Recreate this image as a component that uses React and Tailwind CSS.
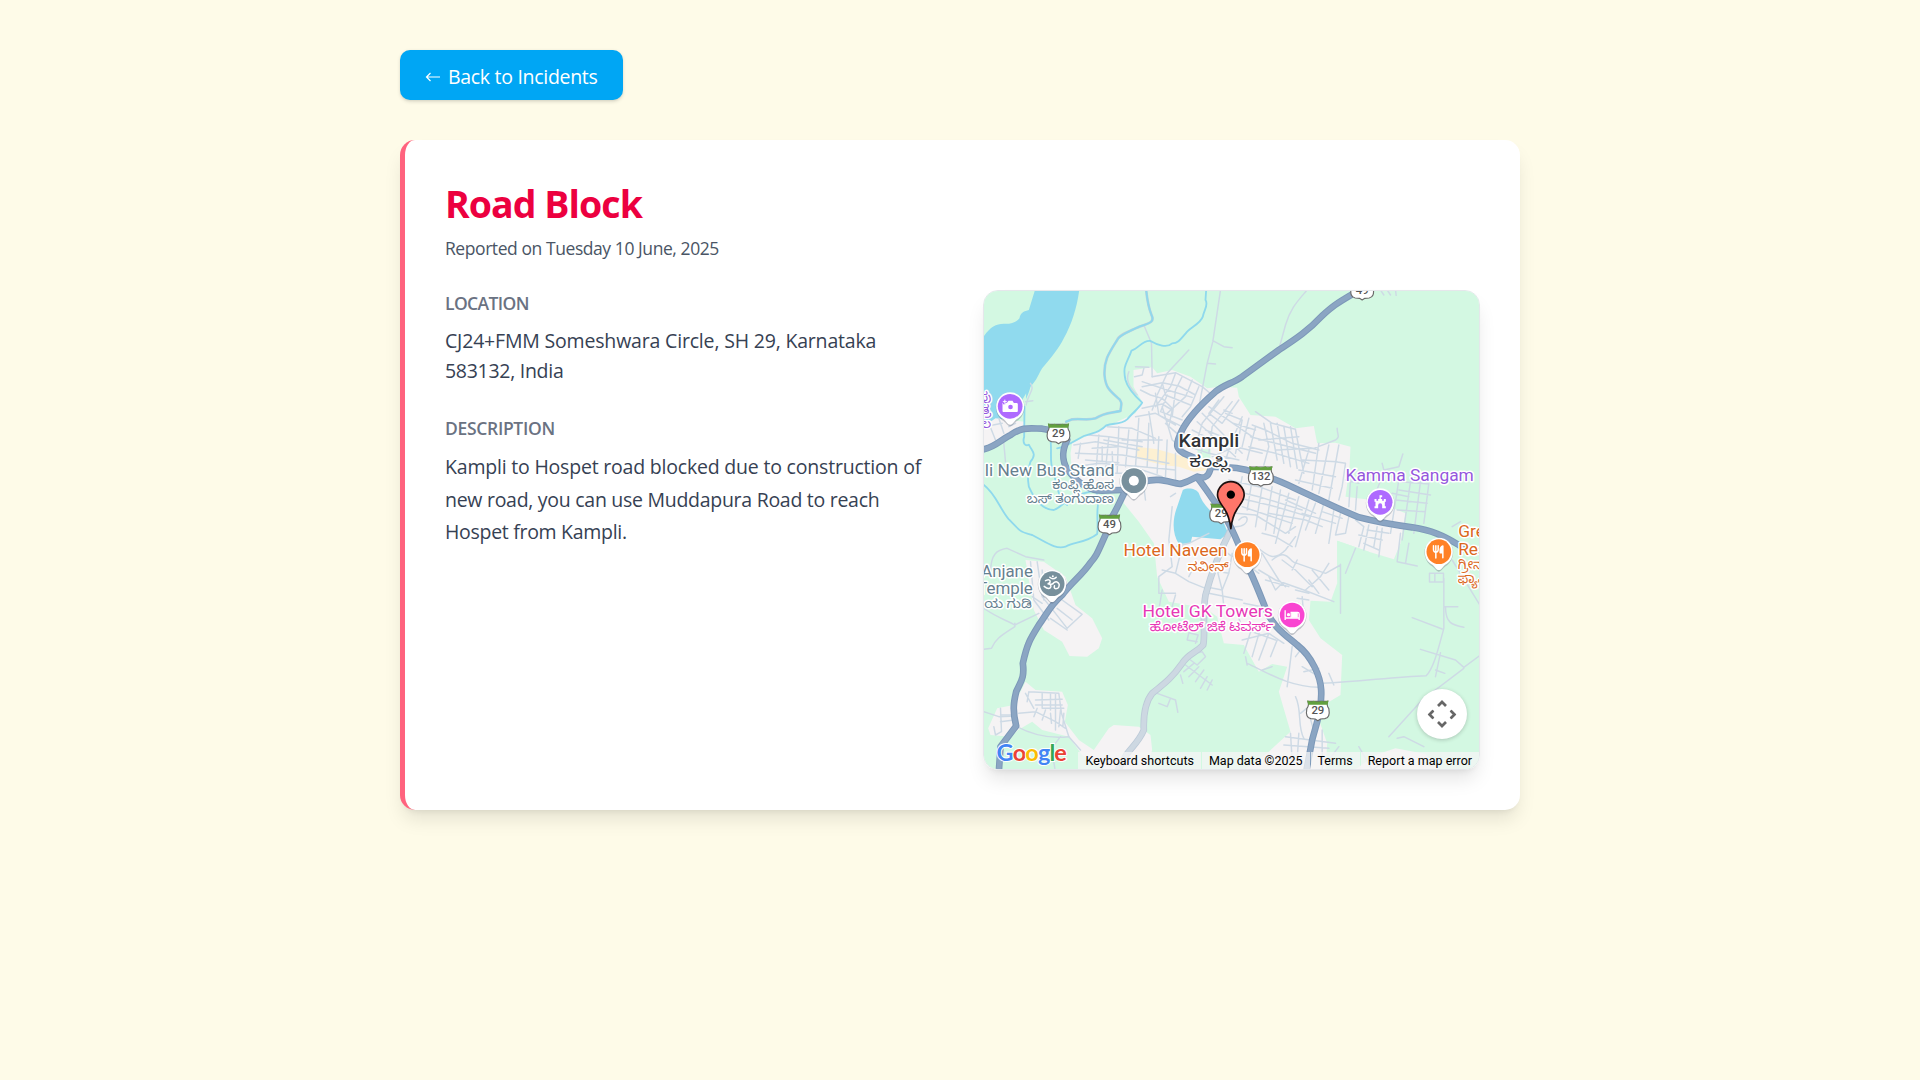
const MAP_FONT = 'Roboto, "Noto Sans", "Noto Sans Kannada", sans-serif';

const Label = ({ x, y, size, color, width, weight = 400, anchor = 'start', children }) => (
  <text
    x={x}
    y={y}
    fontSize={size}
    fill={color}
    fontWeight={weight}
    fontFamily={MAP_FONT}
    textAnchor={anchor}
    textLength={width}
    lengthAdjust="spacingAndGlyphs"
    stroke="#ffffff"
    strokeWidth="9"
    strokeLinejoin="round"
    paintOrder="stroke"
  >
    {children}
  </text>
);

const Shield = ({ x, y, w = 66, children }) => (
  <g transform={`translate(${x} ${y})`}>
    <path
      d={`M${-w / 2 + 3} -27 Q${-w / 2 + 8} -15 ${-w / 2} -5 Q${-w / 2 - 5} 22 ${-w / 2 + 12} 25 L-8 26 L0 31 L8 26 L${w / 2 - 12} 25 Q${w / 2 + 5} 22 ${w / 2} -5 Q${w / 2 - 8} -15 ${w / 2 - 3} -27 Z`}
      fill="#fff"
      stroke="#6b6b6b"
      strokeWidth="3.5"
      strokeLinejoin="round"
    />
    <path
      d={`M${-w / 2 + 1} -30 Q${-w / 4} -23 ${-w / 5} -29 Q0 -23 ${w / 5} -29 Q${w / 4} -23 ${w / 2 - 1} -30 L${w / 2 - 4} -17 H${-w / 2 + 4} Z`}
      fill="#62a03f"
    />
    <text x="0" y="12" fontSize="34" fill="#555" fontWeight="500" textAnchor="middle" fontFamily={MAP_FONT}>
      {children}
    </text>
  </g>
);

const Poi = ({ x, y, color, children }) => (
  <g transform={`translate(${x} ${y})`}>
    <path
      d="M0 58 C-7 58 -11 49 -20 42 C-34 34 -43 18 -43 0 A43 43 0 0 1 43 0 C43 18 34 34 20 42 C11 49 7 58 0 58 Z"
      fill="#5f6b78"
      opacity="0.35"
      transform="translate(0 2)"
    />
    <path
      d="M0 55 C-7 55 -10 48 -19 39 C-33 32 -42 18 -42 0 A42 42 0 0 1 42 0 C42 18 33 32 19 39 C10 48 7 55 0 55 Z"
      fill="#fff"
    />
    <circle r="37" fill={color} />
    {children}
  </g>
);

const Fork = () => (
  <g fill="none" stroke="#fff" strokeWidth="4.5" strokeLinecap="round">
    <path d="M-16 -18 V-6 Q-16 1 -9 1 Q-2 1 -2 -6 V-18 M-9 -18 V19" />
    <path d="M12 18 V-17 Q4 -14 4 -3 V3 H12" fill="#fff" strokeLinejoin="round" />
  </g>
);

const highways = [
  'M25 508 C60 500 75 480 105 465 C140 440 160 445 200 446 L250 455',
  'M275 480 C255 520 262 555 285 580 C310 610 340 632 380 632 L440 630',
  'M70 1475 L75 1400 L122 1338 C110 1290 115 1265 122 1235 C135 1205 148 1195 142 1150 C155 1090 165 1075 190 1035 C215 1000 225 975 260 945 C290 905 320 885 345 848 C365 825 365 820 392 760 L410 710 C425 685 435 660 450 632',
  'M1135 40 C1080 72 1070 80 1040 107 C995 155 955 180 910 210 L800 290 C770 310 745 315 720 335 C680 370 640 410 620 450 C595 500 605 508 625 520 L660 535',
  'M505 605 C550 592 575 605 615 612 C640 605 655 595 665 590 C690 600 702 585 706 560 L755 562 C800 562 830 575 860 587 C900 595 930 612 990 640 C1060 672 1080 683 1150 712 C1200 725 1240 733 1310 742 C1370 752 1400 765 1450 795 L1475 812',
  'M665 592 C690 625 710 655 735 690 C770 735 790 800 822 870 C845 920 860 960 870 985 C890 1040 930 1065 965 1095 C1010 1130 1035 1190 1037 1230 C1040 1290 1020 1340 1010 1380 L992 1475',
];

const greyRoads = [
  'M768 745 C740 800 710 870 690 945 C680 1000 690 1070 683 1095 C660 1120 640 1120 620 1150 C585 1200 560 1215 530 1240 C510 1265 503 1300 505 1350 C490 1385 470 1400 452 1425 L425 1475',
];

const rivers = [
  { d: 'M512 30 C515 60 520 85 528 105 C540 130 515 130 485 143 C460 155 430 165 425 180 C400 220 385 240 387 285 C390 320 400 330 425 352 C445 365 435 380 435 393 C400 400 385 398 360 415 C335 422 320 415 290 418 L272 425', bank: true },
  { d: 'M692 30 L690 60 C700 75 685 90 682 110 C675 130 650 140 635 155 C610 185 605 190 590 190 C575 205 545 195 525 183 C500 180 490 205 468 212 C455 250 440 255 450 300 C455 320 475 345 500 368 C495 380 470 400 455 418 C435 435 415 428 392 436 C370 460 350 458 325 468 C300 480 275 500 245 505', bank: false },
  { d: 'M147 380 L146 470 C140 490 150 500 160 494 C170 515 185 520 165 545 C155 570 155 590 160 620 C180 665 205 690 235 690 C260 680 265 665 285 655 C310 640 330 640 345 635', bank: false },
  { d: 'M225 480 C230 520 220 550 235 580 C245 620 250 660 275 675', bank: false },
  { d: 'M25 615 C60 640 75 690 100 718 C140 760 135 755 170 765 C210 785 240 810 270 800 C295 785 330 790 365 762 C370 730 360 700 370 660 L362 635', bank: false },
];

const towns = [
  'M474 270 L530 262 L545 280 L590 270 L645 290 L695 325 L735 320 L785 323 L790 350 L825 405 L900 410 L960 445 L1015 438 L1025 490 L1080 488 L1125 500 L1122 560 L1110 650 L1190 660 L1290 700 L1275 790 L1255 838 L1180 815 L1085 782 L1085 910 L1065 965 L1005 962 L1000 1020 L1035 1075 L1100 1125 L1095 1245 L1020 1290 L1055 1390 L1050 1475 L800 1475 L880 1415 L945 1355 L910 1235 L935 1160 L890 1152 L850 1175 L805 1095 L745 1090 L725 1010 L690 985 L580 965 L545 890 L535 790 L490 725 L445 670 L440 640 L330 620 L290 590 L285 520 L290 490 L350 460 L480 400 L500 365 L474 320 Z',
  'M25 430 L75 410 L147 425 L150 445 L95 470 L25 505 Z',
  'M150 840 L205 845 L270 890 L300 975 L350 1015 L380 1075 L370 1105 L335 1130 L282 1128 L260 1085 L205 1050 L175 990 Z',
  'M150 1205 L180 1230 L260 1235 L277 1275 L268 1325 L310 1380 L355 1410 L400 1345 L415 1335 L490 1340 L525 1365 L530 1410 L510 1475 L400 1475 L320 1425 L280 1370 L200 1350 L170 1325 L128 1350 L105 1370 L45 1365 L38 1345 L65 1285 L115 1275 Z',
  'M1130 1475 L1200 1425 L1260 1405 L1350 1422 L1400 1475 Z',
];

const streets = [
  // outer country lanes
  'M505 135 L528 190 L530 290 M735 30 L712 185 L695 250 L672 370 M712 182 L745 200 L770 203 M695 250 L720 252 M640 210 L575 280 L545 345 M993 32 C965 65 945 85 930 135 L910 208 M1215 30 L1225 45 M1235 30 L1245 45 M1260 30 L1262 46',
  'M165 310 C180 330 155 345 152 375 M150 365 L172 362 M85 490 L90 545 M25 1108 L48 1105 C60 1075 80 1065 118 1040 L118 1030 M25 985 C60 1010 90 1020 118 1035 L190 1000 M45 880 C45 820 65 810 95 805 L150 830 L205 840 M25 1295 L70 1310 L120 1308 M120 1338 C180 1370 240 1375 280 1370 M255 1370 L228 1405 L238 1465',
  'M1140 805 L1110 880 M1405 895 L1405 1045 C1390 1100 1375 1165 1352 1187 C1250 1190 1160 1205 1040 1210 M1362 880 h42 v26 h-42 Z M1378 880 v26 M1405 980 h42 M1410 980 C1410 1030 1430 1035 1465 1042 M1310 1013 L1400 1047 M1335 1108 L1440 1140 L1465 1162 L1515 1125 M1395 1118 L1380 1190 M1380 1170 L1408 1180 M1465 1165 L1340 1260 L1240 1370 M1265 1375 L1285 1370 L1345 1400 M1430 840 L1515 978',
  // north quarter
  'M477 290 L500 285 L505 265 M500 320 L560 308 L610 318 L660 345 M495 330 L525 345 L560 355 L590 385 M530 290 L600 278 L680 320 L710 345 M600 280 L585 320 L540 380 M540 340 L550 405 L600 435 M500 305 L575 330 L650 352 M560 308 L570 345 L645 375 M620 290 L600 330 L590 410 M650 300 L630 350 L575 400 M500 385 L560 372 L590 390 L580 440 M480 410 L540 400 L620 440 M520 395 L535 490 M560 380 L590 480 L640 520 M545 350 L530 390 M670 320 L645 380 L620 410 M570 430 L615 470 M480 260 L520 262 M460 275 C450 300 460 320 485 345 M575 345 L555 395 L620 420',
  // west quarter
  'M295 495 L360 485 L490 510 M300 520 L440 525 L580 550 M315 490 L308 535 M340 465 L400 470 L500 485 M370 465 L360 590 M400 470 L390 570 M430 440 L425 580 M460 450 L450 560 M490 415 L480 560 M300 560 L370 550 L500 560 L600 570 M335 580 L450 580 M350 505 L430 500 M440 480 L560 480 M520 430 L515 560 M385 480 L500 500 M330 540 L430 548 M395 440 L470 445 L540 475 M550 470 L545 580 M575 480 L570 590 M380 500 L380 545 M410 515 L412 560 M500 570 L560 590 M505 620 L510 660 M600 520 L600 600',
  // centre and north-east
  'M680 400 L800 520 M665 425 L780 530 M700 380 L830 470 M745 350 L680 430 L660 500 M770 365 L710 440 L700 520 M790 360 L740 430 M800 410 L770 480 L750 540 M820 415 L800 500 M770 400 L745 390 M775 430 L840 450 M690 450 L790 490 M750 400 L800 420 L780 520 M640 500 L700 520 L790 540 M730 360 L700 400 L740 430 M650 450 L690 470 L670 540 M710 530 L780 500 L860 520',
  'M840 395 L890 430 L960 448 M830 435 L870 450 L950 490 L1030 510 M825 470 L900 490 L1020 520 M820 500 L900 520 L1000 550 M840 440 L815 540 M865 430 L880 500 L865 555 M885 430 L905 540 M905 430 L925 550 M925 440 L945 560 M945 440 L965 565 M850 480 L970 470 M900 510 L1015 505 L1080 480 C1095 470 1085 465 1085 445 M960 450 L985 580 M1000 510 L970 610 M1030 490 L1010 630 M1060 495 L1030 640 M1090 495 L1060 660 M980 540 L1085 545 M970 570 L1080 590 M960 600 L1070 625 M1080 545 L1110 550 L1100 620 L1090 660 M1110 600 L1150 610 M1125 600 L1120 680 M1145 620 L1140 690',
  // east of the centre
  'M760 600 L850 620 L960 660 M745 625 L850 650 L980 690 M775 650 L900 680 L1000 710 M800 680 L950 730 M800 590 L785 670 M830 600 L815 690 M860 620 L840 740 M890 620 L870 750 M915 630 L895 760 M940 640 L900 790 M970 650 L940 760 M1000 660 L960 800 M780 700 L840 705 L930 760 L960 740 M1020 670 L990 750 M1045 670 L1020 760 M1075 690 L1060 790 M1095 700 L1080 765 L1110 760 L1120 710 M980 700 L1080 730 M930 660 L1020 700 M880 700 L990 720 L1040 740 M790 720 C820 690 830 740 780 740 M1040 695 L1100 715 M1140 720 L1165 740 L1150 800 M1180 735 L1165 810 M1205 740 L1195 800 M1150 765 L1220 780 M1175 750 L1240 760 M1165 790 L1210 810 M1220 745 L1210 830',
  // south-east quarter
  'M830 790 C870 820 890 850 930 810 L960 770 M860 820 L910 900 L930 920 M890 840 C940 800 940 850 965 850 L1050 880 L1095 855 M920 840 L960 870 L1010 920 M850 870 L900 900 L985 930 L1075 965 M880 890 L900 930 L920 910 M1060 850 L1035 890 L990 930 M1095 853 V1000 M870 900 L940 920 M810 850 L850 880 M1010 870 L1060 930 M960 930 L1000 940 M980 950 L985 1010 M965 955 L1000 960 M940 1010 L900 1040 M950 870 L965 840 M860 760 L900 770 L950 800 M1000 900 L1030 940',
  'M805 970 L880 985 M800 1080 L880 1060 L925 1090 M815 1050 L900 1080 M830 1040 L805 1120 M855 1045 L830 1130 M880 1060 L850 1140 M905 1080 L885 1130 M815 1150 C880 1180 940 1220 1030 1222 M810 1130 L815 1155 M950 1100 L935 1220 M960 1130 L975 1110 M980 1160 L1030 1190 M985 1175 L1030 1165 M1060 1180 L1075 1215 M960 1250 C980 1290 965 1340 985 1375 M930 1370 L1080 1390 M925 1395 L1060 1405 M945 1360 L950 1440 M970 1360 L965 1440 M1040 1350 L1040 1470 M1150 1400 L1190 1470 L1235 1440 M1090 1400 L1060 1440 M890 1160 L860 1170 M1000 1280 L975 1300 M1000 1300 L1020 1370',
  // south of the lake
  'M590 680 L580 780 L590 860 L550 890 L550 940 L600 940 M585 650 L600 640 M560 870 L600 880 L640 905 L690 925 M600 800 L640 790 L700 760 M620 800 L600 880 M640 890 L650 870 L645 850 M700 870 L760 880 L740 930 L690 920 M760 880 L770 820 M720 850 L740 930 M560 930 L550 990 M600 945 L590 980 M700 940 L800 960 M740 930 L745 980 M730 800 L770 830 L800 820 M745 980 L780 990 L800 1040',
  'M640 1058 L668 1065 L660 1090 M640 1058 L635 1080 L665 1085 M660 1120 L680 1115 L690 1130 L665 1155 L645 1140 M630 1155 L710 1215 M625 1175 L655 1150 M640 1190 L670 1160 M660 1205 L685 1170 M675 1225 L695 1190 M695 1230 L710 1200 M615 1185 L622 1210 M545 1240 L600 1260 L607 1297 M550 1270 L575 1280 L585 1255',
  // south-west hamlets
  'M165 845 L175 960 L220 1020 M185 845 L200 950 M200 870 L205 960 M200 950 L240 1000 L275 1045 L320 1003 L260 960 M225 1015 L275 1050 M170 950 L200 970 M245 985 L290 1020',
  'M160 1235 L250 1240 L258 1300 L280 1370 L315 1410 M160 1235 L155 1265 M180 1260 L260 1258 M180 1275 L260 1275 M200 1240 L200 1285 L265 1285 M225 1240 V1290 M240 1240 V1350 M130 1300 L180 1295 L240 1325 L270 1345 M185 1285 L175 1310 M255 1290 L250 1340 M75 1285 L78 1355 L60 1365 L55 1340 M75 1325 L115 1320 M75 1305 L110 1305 M210 1290 L200 1320 M150 1240 L175 1285 M265 1300 L262 1340 M225 1300 L228 1330',
  // north-east edge
  'M1270 600 L1245 760 M1270 630 L1365 645 M1275 605 L1360 612 M1260 660 L1355 670 M1265 690 L1350 695 M1305 605 L1280 780 M1335 605 L1315 760 M1360 610 L1345 730 M1220 590 L1200 640 M1220 550 L1225 570 L1270 560 L1282 522 M1275 760 L1265 845 L1325 858 M1300 790 L1290 850 M1250 640 L1300 650 M1430 740 L1455 725 M25 440 L80 430 M40 430 L60 480 M70 415 L85 460 M100 440 L120 430',
];

function MapCanvas() {
  return (
    <svg className="block h-full w-full" viewBox="25.5 33 1486.5 1434" preserveAspectRatio="none">
      <rect x="24" y="30" width="1491" height="1440" fill="#d3f8e2" />
      <g fill="#f5f3f4">
        {towns.map((d) => (
          <path key={d} d={d} />
        ))}
      </g>
      <path d="M485 500 L545 508 L640 535 L690 545 L700 570 L655 575 L610 560 L560 555 L485 535 Z" fill="#fdf0d2" />
      <path d="M665 508 H705 V535 H670 Z M1085 782 L1180 815 L1085 900 Z" fill="#d3f8e2" />
      <g fill="#90daee">
        <path d="M180 25 L160 90 C140 95 135 100 132 115 C120 130 100 132 85 131 C60 132 45 140 24 170 V440 H95 C125 410 155 360 165 320 C185 300 190 280 200 265 C230 230 250 205 265 175 C290 130 305 80 312 25 Z" />
        <path d="M622 630 C640 620 665 628 670 640 C680 670 700 690 745 730 L758 760 L735 778 L650 770 L645 790 L610 792 C590 760 590 720 605 680 Z" />
      </g>
      <path d="M24 435 L95 435 L152 340 L150 440 L24 500 Z" fill="#d3f8e2" />
      <path d="M24 440 L60 415 L148 425 L150 440 L60 485 L24 500 Z" fill="#f5f3f4" />
      <g fill="none" strokeLinecap="round" strokeLinejoin="round">
        {streets.map((d) => (
          <path key={d} d={d} stroke="#cedae5" strokeWidth="4.4" />
        ))}
        {rivers.map((r) => (
          <g key={r.d}>
            {r.bank && <path d={r.d} stroke="#c3cfdb" strokeWidth="8" />}
            <path d={r.d} stroke="#8fd9ed" strokeWidth="5.5" />
          </g>
        ))}
        {greyRoads.map((d) => (
          <g key={d}>
            <path d={d} stroke="#bccad8" strokeWidth="20" />
            <path d={d} stroke="#cdd8e2" strokeWidth="15" />
          </g>
        ))}
        {highways.map((d) => (
          <path key={d} d={d} stroke="#7c98b8" strokeWidth="20" />
        ))}
        {highways.map((d) => (
          <path key={d} d={d} stroke="#8ba5c3" strokeWidth="14" />
        ))}
      </g>

      <Shield x={249} y={460}>29</Shield>
      <Shield x={402} y={733}>49</Shield>
      <Shield x={1160} y={29}>49</Shield>
      <Shield x={856} y={588} w={72}>132</Shield>
      <Shield x={737} y={700}>29</Shield>
      <Shield x={1027} y={1291}>29</Shield>

      <Label x={609} y={500} size={56} color="#303236" weight={500} width={182}>Kampli</Label>
      <Label x={641} y={561} size={46} color="#303236" width={121}>ಕಂಪ್ಲಿ</Label>
      <Label x={28} y={587} size={52} color="#66808f" width={389}>li New Bus Stand</Label>
      <Label x={230} y={628} size={38} color="#66808f" width={186}>ಕಂಪ್ಲಿ ಹೊಸ</Label>
      <Label x={154} y={670} size={38} color="#66808f" width={261}>ಬಸ್ ತಂಗುದಾಣ</Label>
      <Label x={17} y={890} size={52} color="#66808f" width={155}>Anjane</Label>
      <Label x={5} y={942} size={52} color="#66808f" width={167}>Temple</Label>
      <Label x={26} y={983} size={38} color="#66808f" width={143}>ಯ ಗುಡಿ</Label>
      <Label x={444} y={829} size={52} color="#db681d" width={312}>Hotel Naveen</Label>
      <Label x={637} y={873} size={38} color="#db681d" width={122}>ನವೀನ್</Label>
      <Label x={501} y={1011} size={52} color="#e737b6" width={391}>Hotel GK Towers</Label>
      <Label x={523} y={1053} size={38} color="#e737b6" width={371}>ಹೋಟೆಲ್ ಜಿಕೆ ಟವರ್ಸ್</Label>
      <Label x={1110} y={602} size={52} color="#9457dd" width={385}>Kamma Sangam</Label>
      <Label x={1448} y={772} size={52} color="#db681d">Green</Label>
      <Label x={1448} y={824} size={52} color="#db681d">Restaurant</Label>
      <Label x={1447} y={866} size={40} color="#db681d">ಗ್ರೀನ್</Label>
      <Label x={1447} y={908} size={40} color="#db681d">ಫ್ಯಾಮಿಲಿ</Label>
      <Label x={47} y={362} size={38} color="#9457dd" anchor="end">ಪು</Label>
      <Label x={47} y={402} size={38} color="#9457dd" anchor="end">ತ್ರ</Label>
      <Label x={47} y={445} size={38} color="#9457dd" anchor="end">ಲ</Label>

      <Poi x={104} y={379} color="#ae6aff">
        <path d="M-23 -10 H-10 L-5 -17 H7 L11 -10 H19 Q23 -10 23 -6 V14 Q23 17 20 17 H-20 Q-23 17 -23 14 Z" fill="#fff" />
        <circle cx="1" cy="2" r="7" fill="#ae6aff" />
        <path d="M-18 -22 V-6 M-26 -14 H-10" stroke="#ae6aff" strokeWidth="7" />
        <path d="M-16 -20 V-8 M-22 -14 H-10" stroke="#fff" strokeWidth="3" />
      </Poi>
      <Poi x={475} y={602} color="#78909c">
        <circle r="15" fill="#fff" />
      </Poi>
      <Poi x={230} y={911} color="#78909c">
        <g fill="none" stroke="#fff" strokeWidth="4.5" strokeLinecap="round">
          <path d="M-20 -9 Q-6 -15 -6 -6 Q-7 0 -14 0 Q-3 0 -4 9 Q-8 20 -24 8 M-7 1 Q2 4 5 -3 Q16 -10 21 2 Q22 15 11 15 Q4 14 7 6 M-7 -19 Q2 -10 12 -19" />
        </g>
        <circle cx="2" cy="-22" r="3" fill="#fff" />
      </Poi>
      <Poi x={815} y={824} color="#ff8126">
        <Fork />
      </Poi>
      <Poi x={1390} y={815} color="#ff8126">
        <Fork />
      </Poi>
      <Poi x={950} y={1005} color="#f945d1">
        <path d="M-21 -14 V15 M-21 9 H21 M21 15 V-3 Q21 -8 16 -8 H-3 V8" fill="none" stroke="#fff" strokeWidth="4" />
        <path d="M-2 -7 H17 V8 H-2 Z" fill="#fff" />
        <circle cx="-11" cy="-1" r="5" fill="#fff" />
      </Poi>
      <Poi x={1214} y={667} color="#ae6aff">
        <path
          d="M-17 -10 H-11 V-5 H-6 V-10 H-2 V-21 H6 V-15 H2 V-10 H6 V-5 H11 V-10 H17 V-2 H14 V12 H17 V18 H6 V9 Q6 3 0 3 Q-6 3 -6 9 V18 H-17 V12 H-14 V-2 H-17 Z"
          fill="#fff"
        />
      </Poi>

      <path
        d="M766 746 C763 720 758 704 747 687 C738 673 726 661 726 645 A40 40 0 0 1 806 645 C806 661 794 673 785 687 C774 704 769 720 766 746 Z"
        fill="#ff766a"
        stroke="#1c0f0e"
        strokeWidth="5"
        strokeLinejoin="round"
      />
      <circle cx="766" cy="644" r="12.5" fill="#000" />
    </svg>
  );
}

const Chevron = ({ className }) => (
  <svg viewBox="0 0 10 7" className={`absolute h-[7px] w-[10px] ${className}`} fill="none" stroke="#666" strokeWidth="2.7">
    <path d="M1 6 L5 2 L9 6" />
  </svg>
);

const googleLetters = [
  ['G', 'text-[#4285f4]'],
  ['o', 'text-[#ea4335]'],
  ['o', 'text-[#fbbc05]'],
  ['g', 'text-[#4285f4]'],
  ['l', 'text-[#34a853]'],
  ['e', 'text-[#ea4335]'],
];

function IncidentMap() {
  return (
    <div className="relative h-[480px] overflow-hidden rounded-[15px] border border-gray-200 shadow-[0_12.5px_18.75px_-3.75px_rgba(0,0,0,0.1),0_5px_7.5px_-5px_rgba(0,0,0,0.1)]">
      <MapCanvas />
      <div
        className="absolute bottom-[2px] left-[13px] flex text-[23.5px] leading-[30px] font-bold tracking-[-0.9px] [-webkit-text-stroke:2px_white] [paint-order:stroke_fill]"
        style={{ fontFamily: '"Product Sans", Lato, sans-serif' }}
      >
        {googleLetters.map(([letter, color], i) => (
          <span key={i} className={color}>{letter}</span>
        ))}
      </div>
      <button className="absolute right-[12px] bottom-[30px] size-[50px] rounded-full bg-white shadow-[0_1px_4px_rgba(0,0,0,0.2)]">
        <Chevron className="top-[11px] left-[20px]" />
        <Chevron className="bottom-[11px] left-[20px] rotate-180" />
        <Chevron className="top-[22px] left-[9px] -rotate-90" />
        <Chevron className="top-[22px] right-[9px] rotate-90" />
      </button>
      <div
        className="absolute right-0 bottom-0 flex h-[17px] gap-px text-[12.5px] leading-[17px] whitespace-nowrap text-black"
        style={{ fontFamily: 'Roboto, sans-serif' }}
      >
        <span className="bg-[#f5f5f5]/75 px-[7px]">Keyboard shortcuts</span>
        <span className="bg-[#f5f5f5]/75 px-[7px]">Map data ©2025</span>
        <span className="bg-[#f5f5f5]/75 px-[7px]">Terms</span>
        <span className="bg-[#f5f5f5]/75 px-[7px]">Report a map error</span>
      </div>
    </div>
  );
}

export default function App() {
  return (
    <div
      className="min-h-screen bg-[#fefbe8] py-[50px]"
      style={{ fontFamily: '"Segoe UI", "Open Sans", "Noto Sans", sans-serif' }}
    >
      <div className="mx-auto w-[1120px]">
        <button className="mb-[40px] flex h-[50px] w-[223px] items-center gap-[7px] rounded-[10px] bg-sky-500 px-[25px] pt-[3px] text-[19.5px] tracking-[-0.3px] whitespace-nowrap text-white shadow-[0_1.25px_3.75px_rgba(0,0,0,0.12),0_1.25px_2.5px_-1.25px_rgba(0,0,0,0.1)]">
          <svg viewBox="0 0 16 10" className="h-[10px] w-[16px]" fill="none" stroke="currentColor" strokeWidth="1.2">
            <path d="M15 5 H1.5 M5.5 1 L1.5 5 L5.5 9" />
          </svg>
          <span>Back to Incidents</span>
        </button>

        <div className="rounded-[15px] border-l-[5px] border-[#ff637e] bg-white p-[40px] shadow-[0_12.5px_18.75px_-3.75px_rgba(0,0,0,0.1),0_5px_7.5px_-5px_rgba(0,0,0,0.1)]">
          <h1 className="mb-[10px] h-[45px] pt-px text-[37.5px] leading-[45px] font-bold tracking-[-0.95px] text-[#ec003f]">Road Block</h1>
          <p className="mb-[30px] h-[25px] pt-px text-[17.5px] leading-[25px] tracking-[-0.43px] text-gray-600">
            Reported on Tuesday 10 June, 2025
          </p>
          <div className="grid grid-cols-2 gap-[40px]">
            <div className="flex flex-col gap-[30px] pt-px whitespace-nowrap">
              <div>
                <h2 className="mb-[10px] text-[17.5px] leading-[25px] font-semibold tracking-[-0.6px] text-gray-500">LOCATION</h2>
                <p className="text-[19.5px] leading-[30px] text-gray-700">
                  <span className="tracking-[-0.18px]">CJ24+FMM Someshwara Circle, SH 29, Karnataka</span>
                  <br />
                  <span className="tracking-[-0.28px]">583132, India</span>
                </p>
              </div>
              <div>
                <h2 className="mb-[10px] text-[17.5px] leading-[25px] font-semibold tracking-[-0.32px] text-gray-500">DESCRIPTION</h2>
                <p className="text-[19.5px] leading-[32.5px] text-gray-700">
                  <span className="tracking-[-0.2px]">Kampli to Hospet road blocked due to construction of</span>
                  <br />
                  <span className="tracking-[-0.28px]">new road, you can use Muddapura Road to reach</span>
                  <br />
                  <span className="tracking-[-0.3px]">Hospet from Kampli.</span>
                </p>
              </div>
            </div>
            <IncidentMap />
          </div>
        </div>
      </div>
    </div>
  );
}
